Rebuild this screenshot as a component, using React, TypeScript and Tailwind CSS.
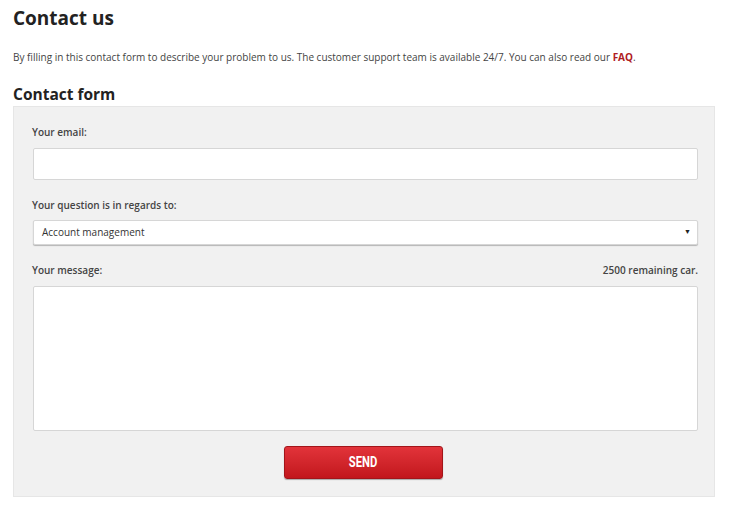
export default function App() {
  return (
    <div className="w-[730px] h-[506px] bg-white text-[#333]" style={{ fontFamily: '"Open Sans", "Noto Sans", sans-serif' }}>
      <div className="pl-[13px] pr-[15px] pt-[4px]">
        <h1 className="text-[19px] font-bold leading-[28px] text-[#222]">Contact us</h1>
        <p className="mt-[18px] text-[10px] leading-[14px] text-[#444]">
          By filling in this contact form to describe your problem to us. The customer support team is available 24/7. You can also read our{" "}
          <span className="font-bold text-[#b01c22]">FAQ</span>.
        </p>
        <h2 className="mt-[19px] text-[15.5px] font-bold leading-[22px] text-[#222]">Contact form</h2>
        <div className="mt-[1px] h-[391px] w-[702px] border border-[#e6e6e6] bg-[#f1f1f1] px-[18px] pt-[18px]">
          <label className="block text-[10px] font-semibold leading-[14px] text-[#444]">Your email:</label>
          <div className="mt-[9px] ml-[1px] h-[32px] w-[665px] rounded-[2px] border border-[#d6d6d6] bg-white" />
          <label className="mt-[18px] block text-[10px] font-semibold leading-[14px] text-[#444]">Your question is in regards to:</label>
          <div className="mt-[8px] ml-[1px] flex h-[25px] w-[665px] items-center justify-between rounded-[2px] border border-[#d6d6d6] bg-white pl-[8px] pr-[6px] shadow-[0_1px_1px_rgba(0,0,0,0.25)]">
            <span className="text-[10px] text-[#333]">Account management</span>
            <span className="text-[7px] text-[#222]">▼</span>
          </div>
          <div className="mt-[18px] flex w-[666px] justify-between">
            <label className="block text-[10px] font-semibold leading-[14px] text-[#444]">Your message:</label>
            <span className="text-[10px] font-semibold leading-[14px] text-[#444]">2500 remaining car.</span>
          </div>
          <div className="mt-[9px] ml-[1px] h-[145px] w-[665px] rounded-[2px] border border-[#d6d6d6] bg-white" />
          <div className="mt-[15px] flex justify-center pr-[2px]">
            <button className="flex h-[33px] w-[159px] items-center justify-center rounded-[3px] border border-[#a3151a] bg-gradient-to-b from-[#e2333a] to-[#c2161c] shadow-[0_1px_1px_rgba(0,0,0,0.3)]">
              <span className="inline-block scale-x-[0.75] text-[15px] font-bold text-white" style={{ fontFamily: '"Roboto", sans-serif' }}>SEND</span>
            </button>
          </div>
        </div>
      </div>
    </div>
  );
}
